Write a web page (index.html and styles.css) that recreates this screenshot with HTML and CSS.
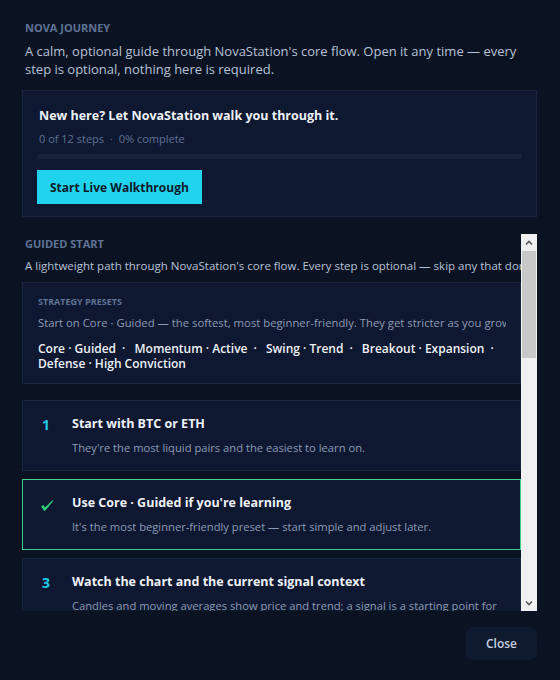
FILE: index.html
```html
<!DOCTYPE html>
<html lang="en">

<head>
    <meta charset="UTF-8">
    <meta name="viewport" content="width=device-width, initial-scale=1.0">
    <title>Nova Journey</title>
    <link rel="stylesheet" href="styles.css">
</head>

<body>
    <div class="journey">
        <div class="eyebrow">Nova Journey</div>
        <p class="intro">A calm, optional guide through NovaStation's core flow. Open it any time — every step is optional, nothing here is required.</p>

        <!-- Walkthrough launcher -->
        <div class="walk-card">
            <h3>New here? Let NovaStation walk you through it.</h3>
            <div class="walk-meta">0 of 12 steps <span class="dot">·</span> 0% complete</div>
            <div class="progress"><div class="progress-fill" style="width: 0%"></div></div>
            <button class="walk-btn">Start Live Walkthrough</button>
        </div>

        <!-- Guided start list -->
        <div class="guided">
            <div class="guided-scroll">
                <div class="eyebrow">Guided Start</div>
                <p class="guided-desc">A lightweight path through NovaStation's core flow. Every step is optional — skip any that don't fit how you trade.</p>

                <div class="presets">
                    <div class="presets-label">Strategy Presets</div>
                    <p class="presets-desc">Start on Core · Guided — the softest, most beginner-friendly. They get stricter as you grow into them.</p>
                    <div class="preset-list">
                        <span class="preset">Core · Guided</span><span class="sep">·</span>
                        <span class="preset">Momentum · Active</span><span class="sep">·</span>
                        <span class="preset">Swing · Trend</span><span class="sep">·</span>
                        <span class="preset">Breakout · Expansion</span><span class="sep">·</span>
                        <span class="preset">Defense · High Conviction</span>
                    </div>
                </div>

                <div class="steps">
                    <div class="step">
                        <div class="step-num">1</div>
                        <div class="step-body">
                            <h4>Start with BTC or ETH</h4>
                            <p>They're the most liquid pairs and the easiest to learn on.</p>
                        </div>
                    </div>

                    <div class="step done">
                        <div class="step-num">
                            <svg width="14" height="14" viewBox="0 0 14 14"><path d="M1.2 8.2 3.6 7 4.9 9.6 12.6 2.2 13.2 3 5.2 12.8 4 12.8Z" fill="#2fd07a"/></svg>
                        </div>
                        <div class="step-body">
                            <h4>Use Core · Guided if you're learning</h4>
                            <p>It's the most beginner-friendly preset — start simple and adjust later.</p>
                        </div>
                    </div>

                    <div class="step">
                        <div class="step-num">3</div>
                        <div class="step-body">
                            <h4>Watch the chart and the current signal context</h4>
                            <p>Candles and moving averages show price and trend; a signal is a starting point for your own read, not an order.</p>
                        </div>
                    </div>

                    <div class="step">
                        <div class="step-num">4</div>
                        <div class="step-body">
                            <h4>Pick a timeframe that fits your pace</h4>
                            <p>Higher timeframes move slower and are easier to follow.</p>
                        </div>
                    </div>

                    <div class="step">
                        <div class="step-num">5</div>
                        <div class="step-body">
                            <h4>Read the signal card before acting</h4>
                            <p>Entry, stop and target are suggestions — check that they make sense to you.</p>
                        </div>
                    </div>
                </div>
            </div>

            <!-- scrollbar for the list -->
            <div class="scrollbar">
                <span class="sb-btn">
                    <svg width="8" height="8" viewBox="0 0 8 8"><path d="M1 5.5 4 2.5 7 5.5" fill="none" stroke="#5a5a5a" stroke-width="1.6"/></svg>
                </span>
                <span class="sb-thumb"></span>
                <span class="sb-track"></span>
                <span class="sb-btn">
                    <svg width="8" height="8" viewBox="0 0 8 8"><path d="M1 2.5 4 5.5 7 2.5" fill="none" stroke="#5a5a5a" stroke-width="1.6"/></svg>
                </span>
            </div>
        </div>

        <div class="footer">
            <button class="close-btn">Close</button>
        </div>
    </div>
</body>

</html>
```

FILE: styles.css
```css
body {
    background: #0b1322;
    color: #b6c2d6;
    font-family: "Open Sans", "Noto Sans", sans-serif;
    margin: 0;
    padding: 0;
}

.journey {
    padding: 20px 23px 0 22px;
}

.eyebrow {
    font-size: 11px;
    font-weight: 700;
    text-transform: uppercase;
    color: #5f7395;
    padding-left: 3px;
    line-height: 16px;
}

.intro {
    margin: 6px 0 0;
    padding-left: 3px;
    font-size: 13px;
    line-height: 18px;
    color: #b6c2d6;
}

.walk-card {
    margin-top: 12px;
    background: #0e1830;
    border: 1px solid #19243d;
    padding: 16px 14px 12px;
}

.walk-card h3 {
    margin: 0;
    padding-left: 2px;
    font-size: 12.5px;
    line-height: 18px;
    color: #eef2f8;
}

.walk-meta {
    margin-top: 6px;
    padding-left: 2px;
    font-size: 11px;
    line-height: 15px;
    color: #5f7395;
}

.walk-meta .dot {
    margin: 0 3px;
}

.progress {
    margin-top: 8px;
    height: 5px;
    background: #16213a;
}

.progress-fill {
    height: 100%;
    background: #22d3ee;
}

.walk-btn {
    display: block;
    margin-top: 11px;
    background: #22d3ee;
    color: #0b1a2a;
    border: none;
    font-family: inherit;
    font-size: 12px;
    font-weight: 700;
    padding: 0 13px;
    height: 34px;
    cursor: pointer;
}

.guided {
    margin-top: 17px;
    height: 377px;
    display: flex;
}

.guided-scroll {
    flex: 1;
    min-width: 0;
    overflow: hidden;
}

.guided .eyebrow {
    line-height: 20px;
}

.scrollbar {
    flex-shrink: 0;
    width: 16px;
    background: #f0f0f0;
    display: flex;
    flex-direction: column;
}

.sb-btn {
    height: 17px;
    display: flex;
    align-items: center;
    justify-content: center;
}

.sb-thumb {
    height: 107px;
    margin: 0 1px;
    background: #c8c8c8;
}

.sb-track {
    flex: 1;
}

.guided-desc {
    margin: 4px 0 0;
    padding-left: 3px;
    font-size: 11.5px;
    line-height: 16px;
    white-space: nowrap;
    overflow: hidden;
}

.presets {
    margin-top: 8px;
    background: #0e1830;
    border: 1px solid #19243d;
    padding: 13px 14px 12px 15px;
}

.presets-label {
    font-size: 9px;
    font-weight: 700;
    line-height: 12px;
    text-transform: uppercase;
    color: #5f7395;
}

.presets-desc {
    margin: 7px 0 0;
    font-size: 11.3px;
    line-height: 16px;
    color: #8d9cb5;
    white-space: nowrap;
    overflow: hidden;
}

.preset-list {
    margin-top: 10px;
    font-size: 12px;
    font-weight: 600;
    line-height: 15px;
    color: #eef2f8;
}

.preset {
    white-space: nowrap;
}

.preset-list .sep {
    margin: 0 6px;
}

.steps {
    display: flex;
    flex-direction: column;
    gap: 8px;
    margin-top: 16px;
}

.step {
    display: flex;
    background: #0e1830;
    border: 1px solid #19243d;
    padding: 14px 14px 14px 0;
}

.step.done {
    border-color: #3fd08e;
}

.step-num {
    flex-shrink: 0;
    width: 30px;
    padding-left: 19px;
    font-size: 14px;
    font-weight: 700;
    color: #22c7e6;
    line-height: 20px;
}

.step-num svg {
    display: block;
    margin: 4px 0 0 -2px;
}

.step-body {
    min-width: 0;
}

.step-body h4 {
    margin: 0;
    font-size: 12.5px;
    line-height: 18px;
    color: #eef2f8;
}

.step-body p {
    margin: 7px 0 0;
    font-size: 11.2px;
    line-height: 16px;
    color: #8d9cb5;
}

.footer {
    display: flex;
    justify-content: flex-end;
    margin-top: 16px;
}

.close-btn {
    background: #101a2e;
    color: #c6d1e2;
    border: none;
    border-radius: 7px;
    font-family: inherit;
    font-size: 12px;
    font-weight: 600;
    width: 71px;
    height: 33px;
    cursor: pointer;
}
```
